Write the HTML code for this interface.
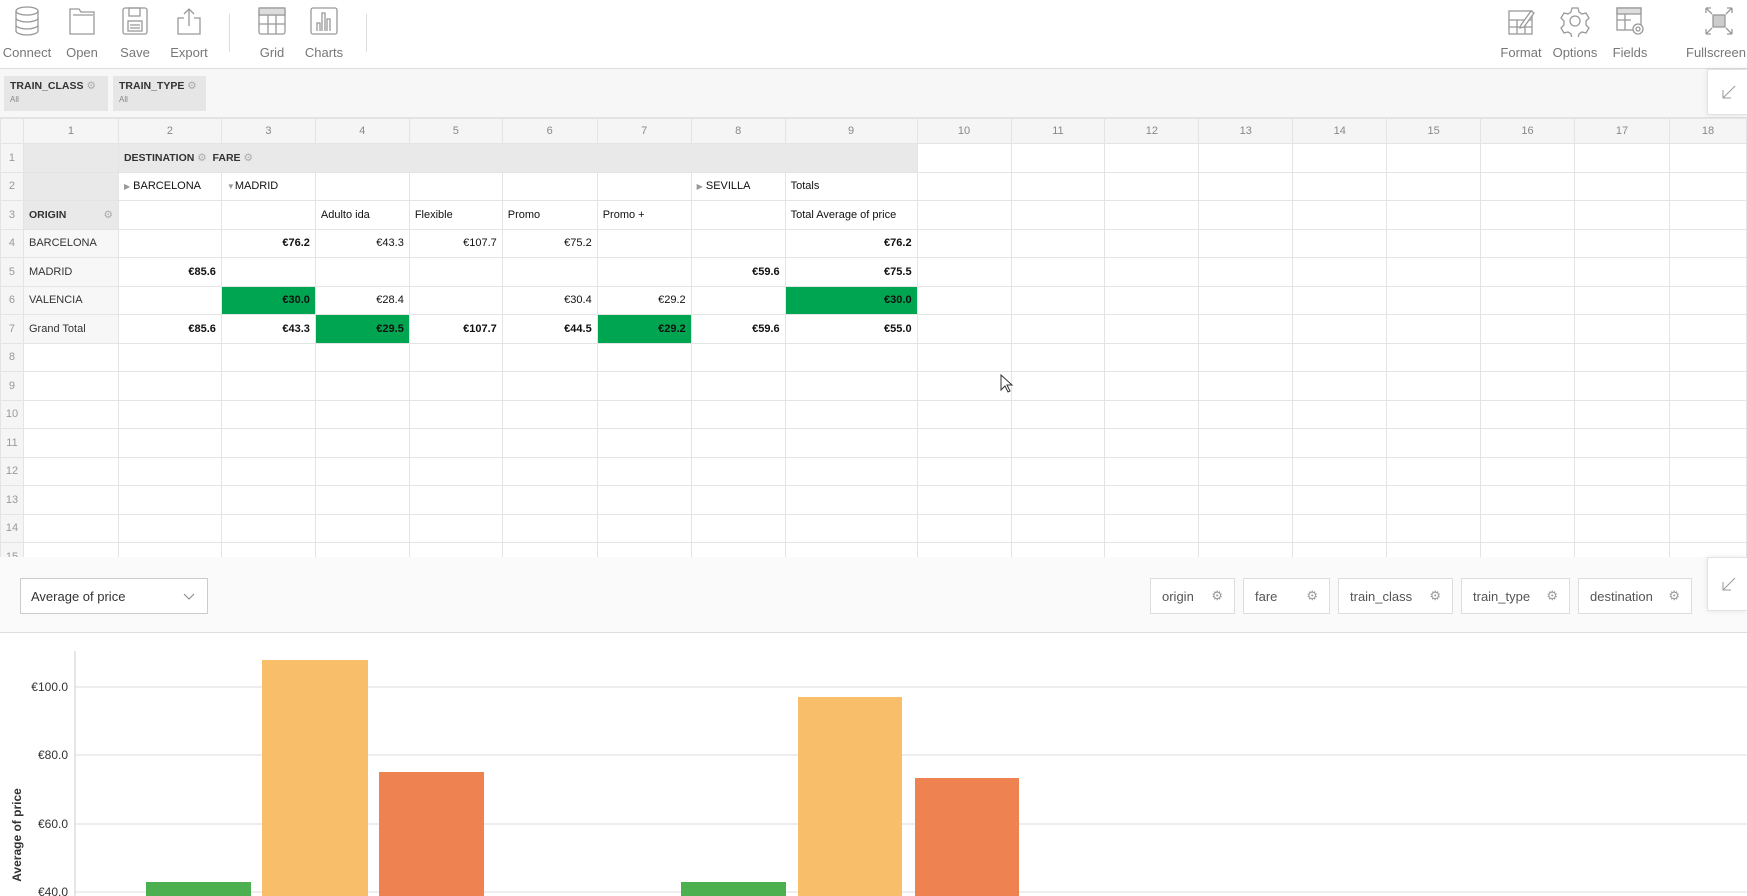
<!DOCTYPE html>
<html><head><meta charset="utf-8"><style>
*{box-sizing:border-box;margin:0;padding:0}
body{width:1747px;height:896px;overflow:hidden;background:#fff;font-family:"Liberation Sans",sans-serif;position:relative;color:#111}
.tb{position:absolute;top:0;left:0;width:1747px;height:69px;border-bottom:1px solid #ddd;background:#fff}
.btn{position:absolute;top:5px;text-align:center;color:#777;font-size:13px}
.btn svg{display:block;margin:0 auto 8px}
.sep{position:absolute;top:14px;width:1px;height:38px;background:#ddd}
.filt{position:absolute;top:69px;left:0;width:1747px;height:49px;background:#f7f7f7;border-bottom:1px solid #e2e2e2}
.chip{position:absolute;top:7px;height:35px;background:#e6e6e6;padding:4px 6px;font-size:10.5px;font-weight:bold;color:#333;white-space:nowrap}
.chip small{display:block;font-weight:normal;font-size:8px;color:#888;margin-top:3px}
.g{color:#aaa;font-weight:normal}
.exp{position:absolute;right:0;width:40px;background:#fff;border:1px solid #e2e2e2;border-right:none;box-shadow:0 0 6px rgba(0,0,0,.08)}
.grid{position:absolute;top:118px;left:0;width:1747px;height:439px;overflow:hidden}
table{border-collapse:collapse;table-layout:fixed;font-size:11px}
td{border:1px solid #e4e4e4;height:28.5px;padding:0 5px;white-space:nowrap;overflow:hidden}
tr.h td{height:25px;background:#f5f5f5;color:#888;text-align:center;font-size:11px}
td.n{background:#f5f5f5;color:#999;text-align:center;padding:0}
td.hd{background:#e9e9e9;font-weight:bold;color:#333}
td.rl{background:#f7f7f7;color:#333}
td.r{text-align:right}
td.b{font-weight:bold}
td.gr{background:#00a551}
.ct{position:absolute;top:557px;left:0;width:1747px;height:76px;background:#fafafa;border-bottom:1px solid #ddd}
.dd{position:absolute;left:20px;top:21px;width:188px;height:36px;background:#fff;border:1px solid #ccc;font-size:13px;color:#333;padding:10px 10px}
.fb{position:absolute;top:21px;height:36px;background:#fff;border:1px solid #ddd;font-size:13px;color:#555;padding:10px 11px}
.fb span{position:absolute;right:11px;top:9px;color:#999}
</style></head><body>
<div class="tb">
 <div class="btn" style="left:2px;width:50px"><svg width="28" height="32" viewBox="0 0 28 32" fill="none" stroke="#999" stroke-width="1.3"><ellipse cx="14" cy="6" rx="11" ry="4"/><path d="M3 6v20c0 2 5 4 11 4s11-2 11-4V6M3 13c0 2 5 4 11 4s11-2 11-4M3 20c0 2 5 4 11 4s11-2 11-4"/></svg>Connect</div>
 <div class="btn" style="left:62px;width:40px"><svg width="30" height="32" viewBox="0 0 30 32" fill="none" stroke="#999" stroke-width="1.3"><path d="M3 4h9l2 3h13v22H3z M6 10h20"/></svg>Open</div>
 <div class="btn" style="left:115px;width:40px"><svg width="28" height="32" viewBox="0 0 28 32" fill="none" stroke="#999" stroke-width="1.3"><rect x="2" y="3" width="24" height="26" rx="2"/><rect x="8" y="3" width="11" height="8"/><rect x="7" y="16" width="14" height="10"/><path d="M9 20h10M9 23h10"/></svg>Save</div>
 <div class="btn" style="left:166px;width:46px"><svg width="28" height="32" viewBox="0 0 28 32" fill="none" stroke="#999" stroke-width="1.3"><path d="M9 13H3v16h22V13h-6M14 4v17M9 9l5-5 5 5"/></svg>Export</div>
 <div class="sep" style="left:229px"></div>
 <div class="btn" style="left:255px;width:34px"><svg width="30" height="32" viewBox="0 0 30 32" fill="none" stroke="#999" stroke-width="1.3"><rect x="2" y="3" width="26" height="26" rx="2"/><path d="M2 10h26M2 19h26M11 10v19M19 10v19"/><rect x="2" y="3" width="26" height="7" fill="#ddd"/></svg>Grid</div>
 <div class="btn" style="left:304px;width:40px"><svg width="30" height="32" viewBox="0 0 30 32" fill="none" stroke="#999" stroke-width="1.3"><rect x="2" y="3" width="26" height="26" rx="2"/><path d="M8 26v-8h3v8M13 26V8h3v18M18 26v-12h3v12"/></svg>Charts</div>
 <div class="sep" style="left:366px"></div>
 <div class="btn" style="left:1499px;width:44px"><svg width="30" height="32" viewBox="0 0 30 32" fill="none" stroke="#999" stroke-width="1.3"><rect x="3" y="6" width="23" height="23"/><path d="M3 15h23M3 22h23M11 15v14M19 15v14"/><path d="M15 20l10-14 3 2-10 14-4 1z" fill="#fff"/></svg>Format</div>
 <div class="btn" style="left:1550px;width:50px"><svg width="32" height="32" viewBox="0 0 32 32" fill="none" stroke="#999" stroke-width="1.3"><path d="M13 3h6l1 4 3 2 4-1 3 5-3 3v4l3 3-3 5-4-1-3 2-1 4h-6l-1-4-3-2-4 1-3-5 3-3v-4l-3-3 3-5 4 1 3-2z"/><circle cx="16" cy="16" r="5"/></svg>Options</div>
 <div class="btn" style="left:1610px;width:40px"><svg width="32" height="32" viewBox="0 0 32 32" fill="none" stroke="#999" stroke-width="1.3"><rect x="3" y="3" width="24" height="22"/><rect x="3" y="3" width="24" height="6" fill="#ddd"/><path d="M3 15h14M11 9v16"/><circle cx="24" cy="24" r="5" fill="#fff"/><circle cx="24" cy="24" r="2"/></svg>Fields</div>
 <div class="btn" style="left:1686px;width:62px;text-align:left"><svg width="32" height="32" viewBox="0 0 32 32" fill="none" stroke="#999" stroke-width="1.3" style="margin:0 0 8px 17px"><rect x="10" y="10" width="12" height="12" fill="#ccc"/><path d="M3 3l6 6M3 3h5M3 3v5M29 3l-6 6M29 3h-5M29 3v5M3 29l6-6M3 29h5M3 29v-5M29 29l-6-6M29 29h-5M29 29v-5"/></svg>Fullscreen</div>
</div>
<div class="filt">
 <div class="chip" style="left:4px;width:104px">TRAIN_CLASS <span class="g">⚙</span><small>All</small></div>
 <div class="chip" style="left:113px;width:93px">TRAIN_TYPE <span class="g">⚙</span><small>All</small></div>
 <div class="exp" style="top:0;height:46px"><svg width="40" height="46"><path d="M27 16L15 28M15 20v8h8" stroke="#999" fill="none"/></svg></div>
</div>
<div class="grid"><table>
<colgroup><col style="width:23px"><col style="width:95px"><col style="width:103px"><col style="width:94px"><col style="width:94px"><col style="width:93px"><col style="width:95px"><col style="width:94px"><col style="width:94px"><col style="width:132px"><col style="width:94px"><col style="width:94px"><col style="width:94px"><col style="width:94px"><col style="width:94px"><col style="width:94px"><col style="width:94px"><col style="width:95px"><col style="width:77px"></colgroup>
<tr class="h"><td></td><td>1</td><td>2</td><td>3</td><td>4</td><td>5</td><td>6</td><td>7</td><td>8</td><td>9</td><td>10</td><td>11</td><td>12</td><td>13</td><td>14</td><td>15</td><td>16</td><td>17</td><td>18</td></tr>
<tr><td class="n">1</td><td class="hd"></td><td class="hd" colspan="8" style="font-size:10.5px">DESTINATION <span class="g">⚙</span>&nbsp; FARE <span class="g">⚙</span></td><td></td><td></td><td></td><td></td><td></td><td></td><td></td><td></td><td></td></tr>
<tr><td class="n">2</td><td class="hd"></td><td><span style="color:#999;font-size:8px">▶</span> BARCELONA</td><td><span style="color:#999;font-size:8px">▼</span>MADRID</td><td></td><td></td><td></td><td></td><td><span style="color:#999;font-size:8px">▶</span> SEVILLA</td><td>Totals</td><td></td><td></td><td></td><td></td><td></td><td></td><td></td><td></td><td></td></tr>
<tr><td class="n">3</td><td class="hd" style="font-size:10.5px">ORIGIN <span class="g" style="float:right">⚙</span></td><td></td><td></td><td>Adulto ida</td><td>Flexible</td><td>Promo</td><td>Promo +</td><td></td><td>Total Average of price</td><td></td><td></td><td></td><td></td><td></td><td></td><td></td><td></td><td></td></tr>
<tr><td class="n">4</td><td class="rl">BARCELONA</td><td></td><td class="r b">€76.2</td><td class="r">€43.3</td><td class="r">€107.7</td><td class="r">€75.2</td><td></td><td></td><td class="r b">€76.2</td><td></td><td></td><td></td><td></td><td></td><td></td><td></td><td></td><td></td></tr>
<tr><td class="n">5</td><td class="rl">MADRID</td><td class="r b">€85.6</td><td></td><td></td><td></td><td></td><td></td><td class="r b">€59.6</td><td class="r b">€75.5</td><td></td><td></td><td></td><td></td><td></td><td></td><td></td><td></td><td></td></tr>
<tr><td class="n">6</td><td class="rl">VALENCIA</td><td></td><td class="r b gr">€30.0</td><td class="r">€28.4</td><td></td><td class="r">€30.4</td><td class="r">€29.2</td><td></td><td class="r b gr">€30.0</td><td></td><td></td><td></td><td></td><td></td><td></td><td></td><td></td><td></td></tr>
<tr><td class="n">7</td><td class="rl">Grand Total</td><td class="r b">€85.6</td><td class="r b">€43.3</td><td class="r b gr">€29.5</td><td class="r b">€107.7</td><td class="r b">€44.5</td><td class="r b gr">€29.2</td><td class="r b">€59.6</td><td class="r b">€55.0</td><td></td><td></td><td></td><td></td><td></td><td></td><td></td><td></td><td></td></tr>
<tr><td class="n">8</td><td></td><td></td><td></td><td></td><td></td><td></td><td></td><td></td><td></td><td></td><td></td><td></td><td></td><td></td><td></td><td></td><td></td><td></td></tr>
<tr><td class="n">9</td><td></td><td></td><td></td><td></td><td></td><td></td><td></td><td></td><td></td><td></td><td></td><td></td><td></td><td></td><td></td><td></td><td></td><td></td></tr>
<tr><td class="n">10</td><td></td><td></td><td></td><td></td><td></td><td></td><td></td><td></td><td></td><td></td><td></td><td></td><td></td><td></td><td></td><td></td><td></td><td></td></tr>
<tr><td class="n">11</td><td></td><td></td><td></td><td></td><td></td><td></td><td></td><td></td><td></td><td></td><td></td><td></td><td></td><td></td><td></td><td></td><td></td><td></td></tr>
<tr><td class="n">12</td><td></td><td></td><td></td><td></td><td></td><td></td><td></td><td></td><td></td><td></td><td></td><td></td><td></td><td></td><td></td><td></td><td></td><td></td></tr>
<tr><td class="n">13</td><td></td><td></td><td></td><td></td><td></td><td></td><td></td><td></td><td></td><td></td><td></td><td></td><td></td><td></td><td></td><td></td><td></td><td></td></tr>
<tr><td class="n">14</td><td></td><td></td><td></td><td></td><td></td><td></td><td></td><td></td><td></td><td></td><td></td><td></td><td></td><td></td><td></td><td></td><td></td><td></td></tr>
<tr><td class="n">15</td><td></td><td></td><td></td><td></td><td></td><td></td><td></td><td></td><td></td><td></td><td></td><td></td><td></td><td></td><td></td><td></td><td></td><td></td></tr>
</table></div>
<svg style="position:absolute;left:1000px;top:374px" width="14" height="20"><path d="M1 1v15l4-4 3 6 2-1-3-6h5z" fill="#fff" stroke="#333"/></svg>
<div class="ct">
 <div class="dd">Average of price<svg style="position:absolute;right:12px;top:14px" width="12" height="8"><path d="M1 1l5 5 5-5" stroke="#888" fill="none"/></svg></div>
 <div class="fb" style="left:1150px;width:85px">origin<span>⚙</span></div>
 <div class="fb" style="left:1243px;width:87px">fare<span>⚙</span></div>
 <div class="fb" style="left:1338px;width:115px">train_class<span>⚙</span></div>
 <div class="fb" style="left:1461px;width:109px">train_type<span>⚙</span></div>
 <div class="fb" style="left:1578px;width:114px">destination<span>⚙</span></div>
 <div class="exp" style="top:0;height:54px"><svg width="40" height="54"><path d="M27 20L15 32M15 24v8h8" stroke="#999" fill="none"/></svg></div>
</div>
<svg style="position:absolute;left:0;top:633px" width="1747" height="263" font-family="Liberation Sans" font-size="12" fill="#333">
 <g stroke="#ddd"><path d="M75 54H1747M75 122H1747M75 191H1747M75 259H1747"/></g>
 <path d="M75 18V263" stroke="#ccc"/>
 <text x="68" y="58" text-anchor="end">€100.0</text><text x="68" y="126" text-anchor="end">€80.0</text><text x="68" y="195" text-anchor="end">€60.0</text><text x="68" y="263" text-anchor="end">€40.0</text>
 <text transform="translate(21,202) rotate(-90)" text-anchor="middle" font-weight="bold" font-size="12">Average of price</text>
 <rect x="146" y="249" width="105" height="20" fill="#4caf50"/><rect x="262" y="27" width="106" height="240" fill="#f9be69"/><rect x="379" y="139" width="105" height="130" fill="#ee8250"/>
 <rect x="681" y="249" width="105" height="20" fill="#4caf50"/><rect x="798" y="64" width="104" height="210" fill="#f9be69"/><rect x="915" y="145" width="104" height="130" fill="#ee8250"/>
</svg>
</body></html>
